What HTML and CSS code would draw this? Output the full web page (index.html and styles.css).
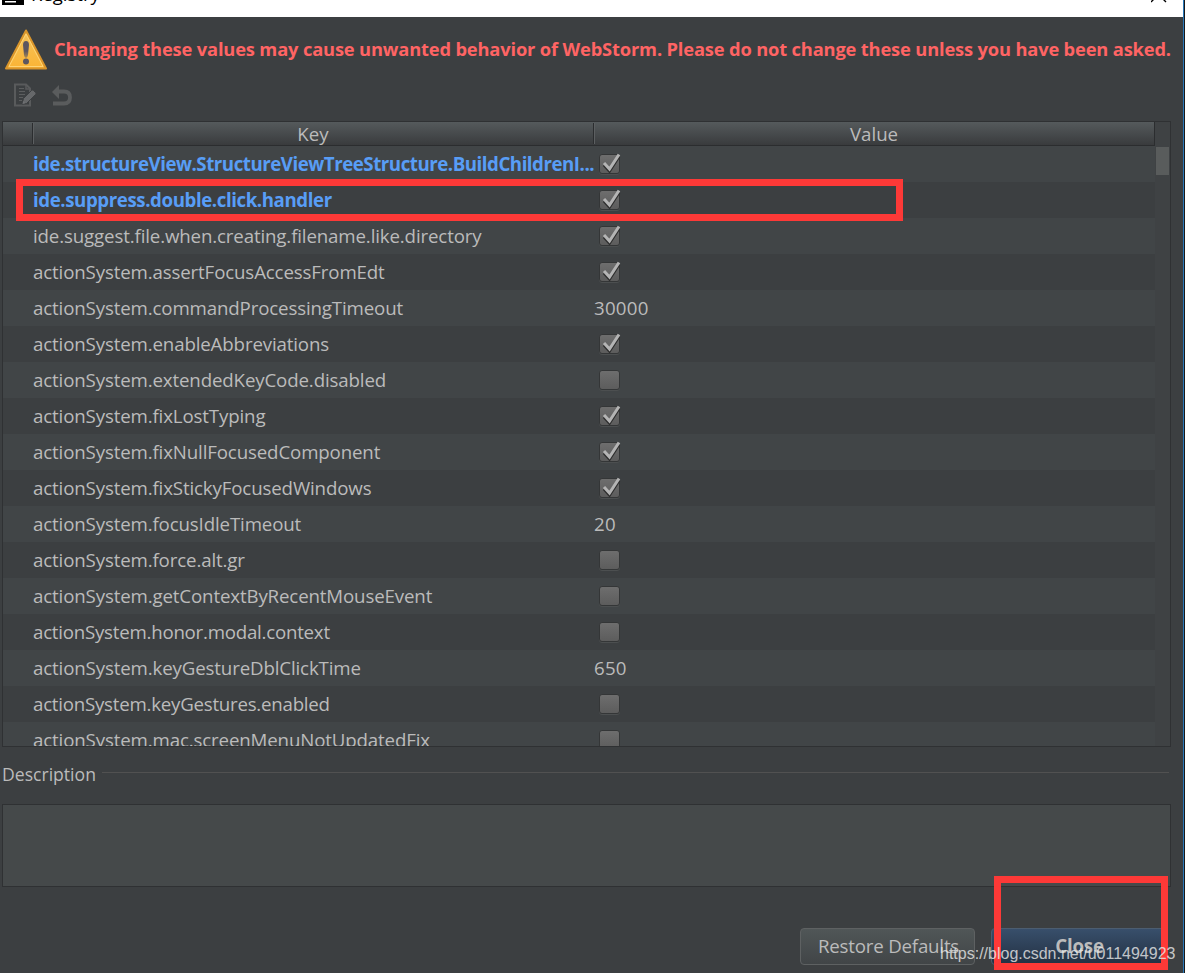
FILE: index.html
```html
<!DOCTYPE html>
<html lang="en">
<head>
<meta charset="utf-8">
<title>Registry</title>
<link rel="stylesheet" href="styles.css">
</head>
<body>
<svg class="defs" width="0" height="0">
  <defs>
    <linearGradient id="box" x1="0" y1="0" x2="0" y2="1"><stop offset="0" stop-color="#6e6e6e"/><stop offset="1" stop-color="#5c5c5c"/></linearGradient>
    <linearGradient id="amber" x1="0" y1="0" x2="0" y2="1"><stop offset="0" stop-color="#f3c35c"/><stop offset="1" stop-color="#fbb435"/></linearGradient>
    <linearGradient id="mark" x1="0" y1="0" x2="0" y2="1"><stop offset="0" stop-color="#5c5660"/><stop offset=".6" stop-color="#5c5660"/><stop offset="1" stop-color="#b08c50"/></linearGradient>
    <symbol id="off" viewBox="0 0 24 24">
      <rect x="2.5" y="3.5" width="20" height="19" rx="2.5" fill="none" stroke="#4c4f50"/>
      <rect x="2.5" y="2.5" width="20" height="19" rx="2.5" fill="url(#box)" stroke="#343637"/>
    </symbol>
    <symbol id="on" viewBox="0 0 24 24">
      <use href="#off"/>
      <path d="M7 13 12.500 19 22 4.500" fill="none" stroke="#2d2d2d" stroke-width="3"/>
      <path d="M7 11 12.500 17 22 2.500" fill="none" stroke="#b4b4b4" stroke-width="3"/>
    </symbol>
  </defs>
</svg>
<div class="window">
  <header class="titlebar">
    <svg class="app" width="22" height="5"><path fill="#000" d="M0 0h22v5H0z"/><path fill="#fff" d="M3 1h11v1.500H3z"/></svg>
    <span class="title">Registry</span>
    <svg class="x" width="16" height="3"><path d="M0 2 3 -1M15 2 12 -1" stroke="#000" stroke-width="1.400"/></svg>
  </header>
  <main class="content">
    <div class="warning">
      <svg width="44" height="42" viewBox="0 0 44 42">
        <path d="M22 1.500 42 39.500H2z" fill="url(#amber)" stroke="#d9952b" stroke-width="2" stroke-linejoin="round"/>
        <path d="M22 5 39 37.500H5z" fill="none" stroke="#ffd476" stroke-width="1"/>
        <path d="M19 16q0-4 3-4t3 4l-1 10q-.5 3-2 3t-2-3z" fill="url(#mark)"/>
        <circle cx="22" cy="32.500" r="3" fill="#5c5660"/>
      </svg>
      <p class="warntext">Changing these values may cause unwanted behavior of WebStorm. Please do not change these unless you have been asked.</p>
    </div>
    <div class="toolbar">
      <svg width="22" height="24" viewBox="0 0 22 24">
        <path d="M1 1.500h11l4 4v17H1z" fill="none" stroke="#595b5c" stroke-width="2"/>
        <path d="M12 1v5h5" fill="none" stroke="#595b5c" stroke-width="1.500"/>
        <path d="M5 5.500h5M5 8.500h6M5 11.500h6M5 14.500h4M5 17.500h3" stroke="#5c5e5f"/>
        <path d="m8 21 1.500-5.500 8-8q1-1 2 0l2 2q1 1 0 2l-9 9z" fill="#66686a" stroke="#3c3f41"/>
        <path d="m8.500 21 .8-3 2.200 2.200z" fill="#707274"/>
      </svg>
      <svg class="undo" width="22" height="22" viewBox="0 0 22 22">
        <path d="M0 7 7 0v14z" fill="#5a5c5d"/>
        <path d="M6 6.500h6q6 0 6 6t-6 6H1" fill="none" stroke="#5a5c5d" stroke-width="3.800"/>
      </svg>
    </div>
    <section class="table">
      <div class="head"><span></span><span>Key</span><span>Value</span></div>
      <div class="track"><div class="thumb"></div></div>
      <div class="rows">
        <div class="row set"><span class="k k1">ide.structureView.StructureViewTreeStructure.BuildChildrenI...</span><svg class="c"><use href="#on"/></svg></div>
        <div class="row set"><span class="k k2">ide.suppress.double.click.handler</span><svg class="c"><use href="#on"/></svg></div>
        <div class="row"><span class="k">ide.suggest.file.when.creating.filename.like.directory</span><svg class="c"><use href="#on"/></svg></div>
        <div class="row"><span class="k">actionSystem.assertFocusAccessFromEdt</span><svg class="c"><use href="#on"/></svg></div>
        <div class="row"><span class="k">actionSystem.commandProcessingTimeout</span><span class="v">30000</span></div>
        <div class="row"><span class="k">actionSystem.enableAbbreviations</span><svg class="c"><use href="#on"/></svg></div>
        <div class="row"><span class="k">actionSystem.extendedKeyCode.disabled</span><svg class="c"><use href="#off"/></svg></div>
        <div class="row"><span class="k">actionSystem.fixLostTyping</span><svg class="c"><use href="#on"/></svg></div>
        <div class="row"><span class="k">actionSystem.fixNullFocusedComponent</span><svg class="c"><use href="#on"/></svg></div>
        <div class="row"><span class="k">actionSystem.fixStickyFocusedWindows</span><svg class="c"><use href="#on"/></svg></div>
        <div class="row"><span class="k">actionSystem.focusIdleTimeout</span><span class="v">20</span></div>
        <div class="row"><span class="k">actionSystem.force.alt.gr</span><svg class="c"><use href="#off"/></svg></div>
        <div class="row"><span class="k">actionSystem.getContextByRecentMouseEvent</span><svg class="c"><use href="#off"/></svg></div>
        <div class="row"><span class="k tight">actionSystem.honor.modal.context</span><svg class="c"><use href="#off"/></svg></div>
        <div class="row"><span class="k">actionSystem.keyGestureDblClickTime</span><span class="v">650</span></div>
        <div class="row"><span class="k tight">actionSystem.keyGestures.enabled</span><svg class="c"><use href="#off"/></svg></div>
        <div class="row"><span class="k">actionSystem.mac.screenMenuNotUpdatedFix</span><svg class="c"><use href="#off"/></svg></div>
      </div>
    </section>
    <div class="label"><span>Description</span><i></i></div>
    <div class="description"></div>
    <div class="buttons"><button class="btn">Restore Defaults</button><button class="btn primary">Close</button></div>
  </main>
</div>
<div class="mark mark-row"></div>
<div class="mark mark-close"></div>
<div class="watermark">https://blog.csdn.net/u011494923</div>
</body>
</html>
```
FILE: styles.css
```css
* { box-sizing: border-box; }
body {
  margin: 0;
  width: 1185px;
  height: 973px;
  overflow: hidden;
  position: relative;
  background: #17191b;
  color: #bbbbbb;
  font: 18.7px/24px "Open Sans", "Noto Sans", sans-serif;
}
.defs { position: absolute; }
.window {
  width: 1184px;
  height: 973px;
  background: #3c3f41;
  border-right: 1px solid #2a78b8;
}
.titlebar {
  height: 17px;
  background: #fff;
  color: #000;
  display: flex;
  align-items: flex-start;
  overflow: hidden;
  padding-left: 2px;
}
.app { flex: none; }
.title { margin: -18px 0 0 7px; font-size: 18.5px; }
.x { margin-left: auto; margin-right: 16px; }
.content { padding: 0 13px 0 2px; display: flex; flex-direction: column; }
.warning { height: 62px; padding: 12px 0 0 2px; display: flex; }
.warning svg { flex: none; }
.warntext {
  margin: 8px 0 0 6px;
  color: #ff6464;
  font-weight: 700;
  font-size: 18.3px;
  letter-spacing: -0.155px;
  white-space: nowrap;
}
.toolbar { height: 42px; padding: 4px 0 0 12px; display: flex; gap: 16px; }
.undo { margin-top: 2px; }
.table {
  width: 1169px;
  height: 626px;
  border: 1px solid #2f3133;
  display: grid;
  grid-template-columns: 1152px 15px;
  grid-template-rows: 24px 600px;
}
.head {
  display: grid;
  grid-template-columns: 30px 561px 561px;
  background: linear-gradient(#555a5c, #393b3d);
  border-bottom: 1px solid #2b2d2f;
  text-align: center;
}
.head span { height: 21px; margin-top: 1px; line-height: 21px; border-right: 1px solid #2b2d2f; box-shadow: 1px 0 #5c5f61; }
.head span:last-child { height: 24px; margin-top: 0; line-height: 23px; box-shadow: none; }
.track { grid-column: 2; grid-row: 1 / 3; background: #3f4244; padding: 25px 1px 0; }
.thumb { height: 28px; background: #595c5c; }
.rows { grid-column: 1; grid-row: 2; overflow: hidden; }
.row {
  height: 36px;
  line-height: 35px;
  display: grid;
  grid-template-columns: 561px 1fr;
  padding-left: 30px;
  white-space: nowrap;
}
.row:nth-child(odd) { background: #414547; }
.k { letter-spacing: -0.14px; }
.tight { letter-spacing: -0.24px; }
.v { letter-spacing: 0.25px; }
.set .k { color: #589df6; font-weight: 700; line-height: 36px; }
.set .k1 { letter-spacing: -0.47px; }
.set .k2 { letter-spacing: -0.42px; }
.c { width: 24px; height: 24px; margin: 6px 0 0 3px; overflow: visible; }
.label { height: 57px; display: flex; padding-top: 15px; font-size: 17.6px; }
.label i { flex: 1; margin: 10px 1px 0 6px; height: 1px; background: #515151; }
.description { width: 1169px; height: 83px; background: #45494a; border: 1px solid #2f3133; }
.buttons { display: flex; justify-content: flex-end; gap: 16px; padding: 41px 2px 0 0; }
.btn {
  width: 175px;
  height: 37px;
  padding: 0 0 2px 2px;
  border: 1px solid #5e6162;
  border-radius: 4px;
  background: linear-gradient(#505657, #414547);
  color: #bbbbbb;
  font: inherit;
  letter-spacing: -0.2px;
  white-space: nowrap;
}
.primary { width: 177px; padding-left: 0; font-weight: 700; background: linear-gradient(#384f6b, #233143); border-color: #4c5d70; }
.mark { position: absolute; border: 7px solid #fd3937; }
.mark-row { left: 16px; top: 179px; width: 887px; height: 42px; }
.mark-close { left: 994px; top: 876px; width: 174px; height: 94px; }
.watermark {
  position: absolute;
  left: 940px;
  top: 943px;
  font: 16px/22px "Liberation Sans", Arial, sans-serif;
  color: rgba(235, 235, 235, .8);
  white-space: nowrap;
}
```
